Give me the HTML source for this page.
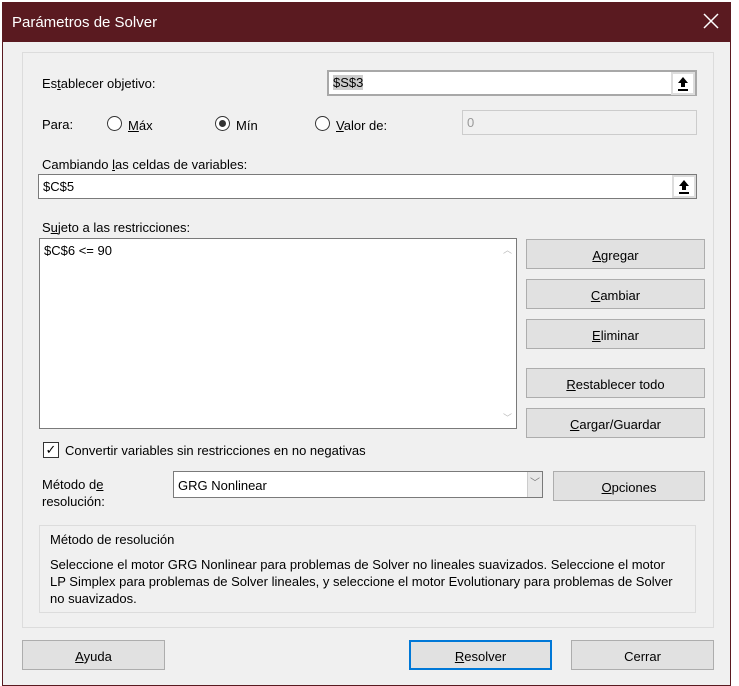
<!DOCTYPE html>
<html><head><meta charset="utf-8"><style>
*{box-sizing:border-box;margin:0;padding:0}
body{width:739px;height:686px;overflow:hidden;background:#fff;font-family:"Liberation Sans",sans-serif;font-size:13px;color:#000;position:relative}
.a{position:absolute}
.dlg{left:2px;top:2px;width:729px;height:684px;background:#f0f0f0;border:1px solid #5a1a20}
.title{left:2px;top:2px;width:729px;height:40px;background:#5a1a20;color:#fff;font-size:15px;padding:12px 0 0 10px}
.grp{left:22px;top:52px;width:692px;height:576px;border:1px solid #dcdcdc}
.in{background:#fff;border:1px solid #7a7a7a;height:24px;padding:4px 0 0 4px}
.btn{background:#e1e1e1;border:1px solid #adadad;text-align:center;padding-top:8px;height:30px}
.up{width:24px;height:23px;top:0;right:0;background:#ddd;padding:2px}
.up div{background:#fff;width:20px;height:19px}
.rad{width:15px;height:15px;border:1px solid #333;border-radius:50%;background:#fff}
u{text-decoration:underline}
</style></head><body>
<div class="a dlg"></div>
<div class="a title">Parámetros de Solver</div>
<svg class="a" style="left:703px;top:13px" width="16" height="16"><path d="M1 1L15 15M15 1L1 15" stroke="#fff" stroke-width="1.5"/></svg>
<div class="a grp"></div>
<div class="a" style="left:42px;top:76px">Es<u>t</u>ablecer objetivo:</div>
<div class="a in" style="left:327px;top:70px;width:370px;height:26px;border:2px solid #a8a8a8;padding-top:3px"><span style="background:#ccc">$S$3</span><div class="a up"><div><svg width="20" height="19"><path d="M10 3L5 9H8V13H12V9H15Z" fill="#000"/><rect x="5" y="15" width="10" height="2" fill="#000"/></svg></div></div></div>
<div class="a" style="left:42px;top:117px">Para:</div>
<div class="a rad" style="left:107px;top:116px"></div><div class="a" style="left:128px;top:118px"><u>M</u>áx</div>
<div class="a rad" style="left:215px;top:116px"><div class="a" style="left:3px;top:3px;width:7px;height:7px;border-radius:50%;background:#333"></div></div><div class="a" style="left:236px;top:118px">Mín</div>
<div class="a rad" style="left:315px;top:116px"></div><div class="a" style="left:336px;top:118px"><u>V</u>alor de:</div>
<div class="a in" style="left:462px;top:110px;width:235px;height:25px;background:#f0f0f0;border-color:#ccc;color:#999">0</div>
<div class="a" style="left:42px;top:157px">Cambiando <u>l</u>as celdas de variables:</div>
<div class="a in" style="left:38px;top:174px;width:659px;height:25px">$C$5<div class="a up" style="height:23px"><div><svg width="20" height="19"><path d="M10 3L5 9H8V13H12V9H15Z" fill="#000"/><rect x="5" y="15" width="10" height="2" fill="#000"/></svg></div></div></div>
<div class="a" style="left:42px;top:220px">S<u>u</u>jeto a las restricciones:</div>
<div class="a in" style="left:39px;top:238px;width:478px;height:191px">$C$6 &lt;= 90
<div class="a" style="right:0;top:0;width:17px;height:189px;background:#fff;color:#bbb;font-size:9px;text-align:center"><div style="margin-top:4px">︿</div><div style="position:absolute;bottom:4px;width:17px">﹀</div></div></div>
<div class="a btn" style="left:526px;top:239px;width:179px"><u>A</u>gregar</div>
<div class="a btn" style="left:526px;top:279px;width:179px"><u>C</u>ambiar</div>
<div class="a btn" style="left:526px;top:319px;width:179px"><u>E</u>liminar</div>
<div class="a btn" style="left:526px;top:368px;width:179px"><u>R</u>establecer todo</div>
<div class="a btn" style="left:526px;top:408px;width:179px"><u>C</u>argar/Guardar</div>
<div class="a" style="left:43px;top:442px;width:16px;height:16px;border:1px solid #333;background:#fff;font-size:13px;line-height:14px;text-align:center">✓</div>
<div class="a" style="left:65px;top:443px">Convertir variables sin restricciones en no negativas</div>
<div class="a" style="left:42px;top:476px;line-height:17px">Método d<u>e</u><br>resolución:</div>
<div class="a in" style="left:173px;top:471px;width:370px;height:27px;padding-top:6px">GRG Nonlinear<div class="a" style="right:0;top:0;width:15px;height:25px;background:#e8e8e8;border-left:1px solid #ccc;color:#777;font-size:10px;text-align:center;line-height:24px">﹀</div></div>
<div class="a btn" style="left:553px;top:471px;width:152px"><u>O</u>pciones</div>
<div class="a" style="left:39px;top:525px;width:657px;height:88px;border:1px solid #dcdcdc"></div>
<div class="a" style="left:50px;top:532px">Método de resolución</div>
<div class="a" style="left:50px;top:556px;width:645px;line-height:17px;white-space:nowrap">Seleccione el motor GRG Nonlinear para problemas de Solver no lineales suavizados. Seleccione el motor<br>LP Simplex para problemas de Solver lineales, y seleccione el motor Evolutionary para problemas de Solver<br>no suavizados.</div>
<div class="a btn" style="left:22px;top:640px;width:143px;height:30px"><u>A</u>yuda</div>
<div class="a btn" style="left:409px;top:640px;width:143px;height:30px;border:2px solid #0078d7;padding-top:7px"><u>R</u>esolver</div>
<div class="a btn" style="left:571px;top:640px;width:143px;height:30px">Cerrar</div>
</body></html>
